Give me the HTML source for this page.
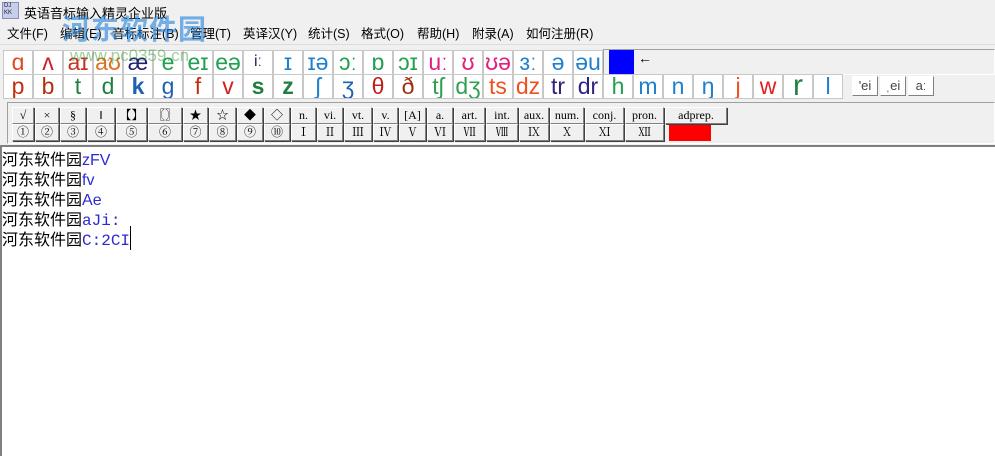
<!DOCTYPE html><html><head><meta charset="utf-8"><style>
*{margin:0;padding:0;box-sizing:border-box}
body{width:995px;height:456px;overflow:hidden;background:#f0f0f0;font-family:"Liberation Sans","Noto Sans CJK SC",sans-serif;position:relative}
.a{position:absolute}
.t{font-size:13px;top:3px;left:24px;color:#000}
.menu{top:23px;font-size:12.5px;color:#000}
.c{position:absolute;background:#fff;border:1px solid #c8c8c8;text-align:center;font-size:23px;line-height:22px;overflow:hidden;white-space:nowrap}
.b{position:absolute;background:#f0f0f0;border:1px solid;border-color:#fff #808080 #808080 #fff;box-shadow:1px 1px 0 #404040;text-align:center;font-family:"Liberation Serif","Noto Serif CJK SC",serif;font-size:12px;line-height:15px;height:17px}
.ln{height:20px;line-height:20px;white-space:nowrap}
</style></head><body>
<div class="a" style="left:2px;top:2px;width:17px;height:17px;background:#c7cfe8;border:1px solid #8890c0;font-size:6px;line-height:7px;color:#224;padding-left:1px">DJ<br>KK</div>
<div class="a t">英语音标输入精灵企业版</div>
<div class="a menu" style="left:7px">文件(F)</div><div class="a menu" style="left:60px">编辑(E)</div><div class="a menu" style="left:112px">音标标注(B)</div><div class="a menu" style="left:190px">管理(T)</div><div class="a menu" style="left:243px">英译汉(Y)</div><div class="a menu" style="left:308px">统计(S)</div><div class="a menu" style="left:361px">格式(O)</div><div class="a menu" style="left:417px">帮助(H)</div><div class="a menu" style="left:472px">附录(A)</div><div class="a menu" style="left:526px">如何注册(R)</div>
<div class="a" style="left:0;top:44px;width:995px;height:1px;background:#ddd"></div>
<div class="a" style="left:603px;top:49px;width:392px;height:26px;border:1px solid;border-color:#a0a0a0 #fff #fff #a0a0a0"></div>
<div class="a" style="left:609px;top:50px;width:25px;height:24px;background:#0000ff"></div>
<div class="a" style="left:638px;top:50px;font-size:14px">←</div>
<div id="ipa"></div>
<div class="a" style="left:7px;top:102px;width:988px;height:42px;border:1px solid;border-color:#a0a0a0 #fff #fff #a0a0a0"></div>
<div id="tb"></div>
<div class="a" style="left:0;top:145px;width:995px;height:311px;background:#fff;border-top:2px solid #808080;border-left:2px solid #808080"></div>
<div class="a" style="left:2px;top:148px;font-size:16px;font-family:'Noto Sans CJK SC',sans-serif">
<div class="ln">河东软件园<span style="color:#2a2ad0;font-family:'Liberation Sans'">zFV</span></div>
<div class="ln">河东软件园<span style="color:#2a2ad0;font-family:'Liberation Sans'">fv</span></div>
<div class="ln">河东软件园<span style="color:#2a2ad0;font-family:'Liberation Sans'">Ae</span></div>
<div class="ln">河东软件园<span style="color:#2a2ad0;font-family:'Liberation Mono'">aJi:</span></div>
<div class="ln">河东软件园<span style="color:#2a2ad0;font-family:'Liberation Mono'">C:2CI</span><span style="border-left:1px solid #000"></span></div>
</div>
<div class="a" style="left:62px;top:8px;font-size:28px;font-weight:bold;color:rgba(30,130,220,.6);font-family:'Noto Sans CJK SC',sans-serif;letter-spacing:1px">河东软件园</div>
<div class="a" style="left:70px;top:46px;font-size:17px;color:rgba(60,160,60,.5)">www.pc0359.cn</div>
<script>
var r1=[["ɑ","#e04a20"],["ʌ","#d02020"],["aɪ","#c83020"],["aʊ","#e07020"],["æ","#202070"],["e","#20a050"],["eɪ","#20a050"],["eə","#20a050"],["iː","#202060",16],["ɪ","#2080d0"],["ɪə","#2080d0"],["ɔː","#20a050"],["ɒ","#20a050"],["ɔɪ","#20a050"],["uː","#e02080"],["ʊ","#e02080"],["ʊə","#e02080"],["ɜː","#2080d0"],["ə","#2080d0"],["əu","#2080d0"]];
var r2=[["p","#c03010"],["b","#b03010"],["t","#208040"],["d","#208040"],["k","#2060b0"],["g","#2060b0"],["f","#c03010"],["v","#d02020"],["s","#208040"],["z","#208040"],["ʃ","#2080d0"],["ʒ","#2060b0"],["θ","#c02020"],["ð","#a03010"],["tʃ","#30a050"],["dʒ","#30a050"],["ts","#f05020"],["dz","#f05020"],["tr","#302080"],["dr","#302080"],["h","#20a050"],["m","#2080d0"],["n","#2080d0"],["ŋ","#2080d0"],["j","#f05020"],["w","#e02020"],["r","#208040",30],["l","#2080d0"]];
var h="";
r1.forEach(function(x,i){h+='<div class="c" style="left:'+(3+i*30)+'px;top:50px;width:30px;height:25px;color:'+x[1]+';font-size:'+(x[2]||23)+'px">'+x[0]+'</div>'});
r2.forEach(function(x,i){h+='<div class="c" style="left:'+(3+i*30)+'px;top:74px;width:30px;height:25px;color:'+x[1]+';font-size:'+(x[2]||23)+'px;font-weight:'+(x[0]=="s"||x[0]=="z"||x[0]=="k"?"bold":"normal")+'">'+x[0]+'</div>'});
["'ei","ˌei","aː"].forEach(function(x,i){h+='<div class="c" style="left:'+(852+i*28)+'px;top:76px;width:26px;height:20px;font-size:13px;line-height:18px;color:#444;border-color:#fff #808080 #808080 #fff">'+x+'</div>'});
document.getElementById("ipa").innerHTML=h;
var bx=[12,35,60,87,116,148,183,209,237,264,291,317,344,373,399,427,454,486,519,550,585,625,665,728];
var t1=["√","×","§","‖","【】","〖〗","★","☆","◆","◇","n.","vi.","vt.","v.","[A]","a.","art.","int.","aux.","num.","conj.","pron.","adprep."];
var t2=["①","②","③","④","⑤","⑥","⑦","⑧","⑨","⑩","Ⅰ","Ⅱ","Ⅲ","Ⅳ","Ⅴ","Ⅵ","Ⅶ","Ⅷ","Ⅸ","Ⅹ","Ⅺ","Ⅻ",""];
var g="";
for(var i=0;i<23;i++){var w=bx[i+1]-bx[i]-1;
g+='<div class="b" style="left:'+bx[i]+'px;top:107px;width:'+w+'px">'+t1[i]+'</div>';
if(i<22)g+='<div class="b" style="left:'+bx[i]+'px;top:124px;width:'+w+'px">'+t2[i]+'</div>';}
g+='<div class="a" style="left:669px;top:125px;width:42px;height:16px;background:#f00"></div>';
document.getElementById("tb").innerHTML=g;
</script>
</body></html>
